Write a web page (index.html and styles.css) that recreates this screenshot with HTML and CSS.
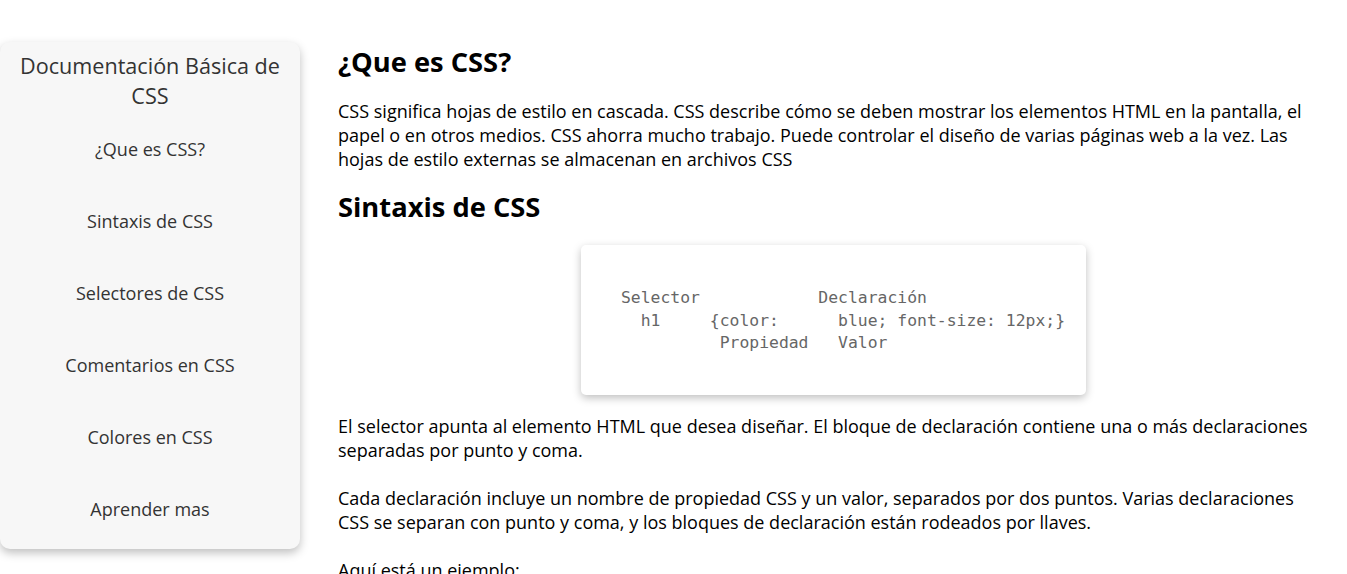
FILE: index.html
```html
<!DOCTYPE html>
<html lang="es">
<head>
<meta charset="utf-8">
<title>Documentación Básica de CSS</title>
<link rel="stylesheet" href="styles.css">
</head>
<body>
<div class="page">
  <nav class="sidebar">
    <header class="sidebar-title">Documentación Básica de CSS</header>
    <ul class="nav-list">
      <li><a class="nav-link" href="#que">¿Que es CSS?</a></li>
      <li><a class="nav-link" href="#sintaxis">Sintaxis de CSS</a></li>
      <li><a class="nav-link" href="#selectores">Selectores de CSS</a></li>
      <li><a class="nav-link" href="#comentarios">Comentarios en CSS</a></li>
      <li><a class="nav-link" href="#colores">Colores en CSS</a></li>
      <li><a class="nav-link" href="#aprender">Aprender mas</a></li>
    </ul>
  </nav>
  <main class="main">
    <section class="section" id="que">
      <h2 class="section-title">¿Que es CSS?</h2>
      <p class="text">CSS significa hojas de estilo en cascada. CSS describe cómo se deben mostrar los elementos HTML en la pantalla, el papel o en otros medios. CSS ahorra mucho trabajo. Puede controlar el diseño de varias páginas web a la vez. Las hojas de estilo externas se almacenan en archivos CSS</p>
    </section>
    <section class="section" id="sintaxis">
      <h2 class="section-title">Sintaxis de CSS</h2>
      <div class="code-wrap">
<pre class="code">Selector            Declaración
  h1     {color:      blue; font-size: 12px;}
          Propiedad   Valor</pre>
      </div>
      <p class="text">El selector apunta al elemento HTML que desea diseñar. El bloque de declaración contiene una o más declaraciones separadas por punto y coma.</p>
      <p class="text">Cada declaración incluye un nombre de propiedad CSS y un valor, separados por dos puntos. Varias declaraciones CSS se separan con punto y coma, y los bloques de declaración están rodeados por llaves.</p>
      <p class="text">Aquí está un ejemplo:</p>
    </section>
  </main>
</div>
</body>
</html>
```
FILE: styles.css
```css
* { box-sizing: border-box; }
html, body { margin: 0; padding: 0; background: #fff; }
body {
  font-family: "Open Sans", "Noto Sans", sans-serif;
  color: #000;
}
.page {
  display: flex;
  align-items: flex-start;
  padding-top: 42px;
}
.sidebar {
  flex: 0 0 300px;
  width: 300px;
  background: #f7f7f7;
  border-radius: 10px;
  box-shadow: 0 4px 10px rgba(0,0,0,0.25);
  padding: 9px 0 4px;
  text-align: center;
  color: #333;
}
.sidebar-title {
  font-size: 21.6px;
  line-height: 29.5px;
  padding: 0 16px;
  margin-bottom: 3px;
}
.nav-list {
  list-style: none;
  margin: 0;
  padding: 0;
}
.nav-list li {
  height: 72px;
  display: flex;
  align-items: center;
  justify-content: center;
}
.nav-link {
  color: #333;
  text-decoration: none;
  font-size: 18px;
}
.main {
  flex: 1;
  padding: 0 24px 0 38px;
}
.section {
  padding-top: 2px;
}
.section + .section {
  padding-top: 0;
}
.section-title {
  font-size: 27.3px;
  font-weight: 700;
  margin: 0 0 18px;
  line-height: 36px;
}
#que .section-title {
  margin-bottom: 19px;
}
.text {
  font-size: 18px;
  line-height: 24px;
  margin: 0 0 24px;
}
#que .text {
  margin-bottom: 18px;
}
.code-wrap {
  display: flex;
  justify-content: center;
  margin: -18px -6px 19px 0;
  padding-top: 20px;
}
.code {
  margin: 0;
  width: 505px;
  padding: 42px 40px 40px;
  background: #fff;
  border-radius: 5px;
  box-shadow: 0 3px 8px rgba(0,0,0,0.25);
  font-family: "DejaVu Sans Mono", "Liberation Mono", monospace;
  font-size: 16.4px;
  line-height: 22.5px;
  color: #666;
}
```
